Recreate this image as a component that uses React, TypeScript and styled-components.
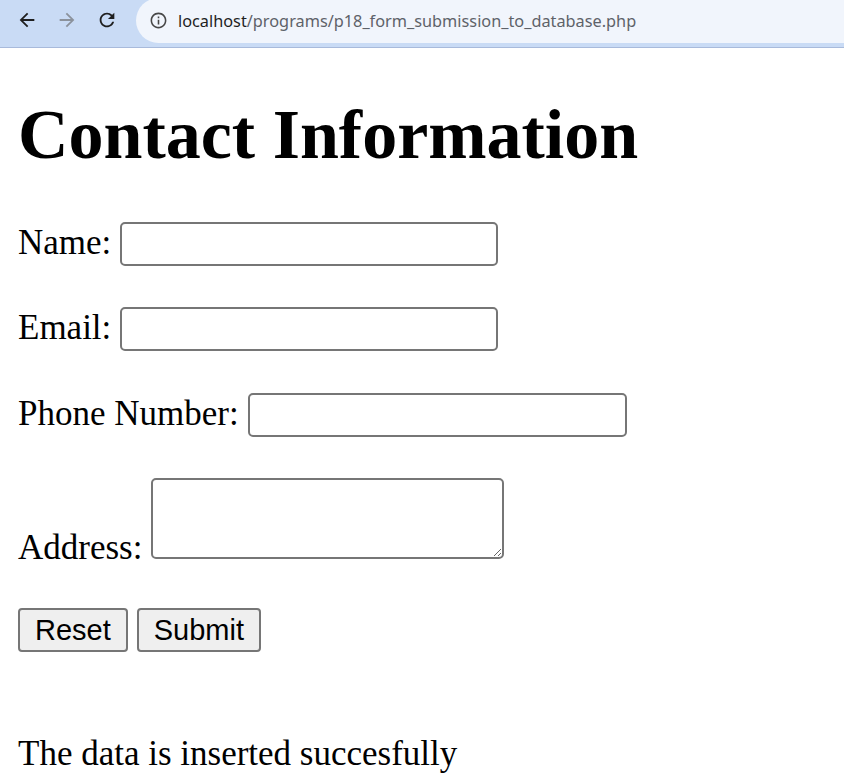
import styled, { createGlobalStyle } from "styled-components";
import { MdArrowBack, MdArrowForward, MdRefresh, MdInfoOutline } from "react-icons/md";

const GlobalStyle = createGlobalStyle`
  html, body {
    margin: 0;
    padding: 0;
    background: #ffffff;
  }
  body {
    font-family: "Liberation Serif", "Times New Roman", serif;
    color: #000000;
  }
`;

const Toolbar = styled.div`
  display: flex;
  align-items: flex-start;
  height: 47px;
  background: #c9dbf5;
  border-bottom: 1px solid #a8badb;
  overflow: hidden;
`;

const NavButton = styled.span<{ $dim?: boolean }>`
  display: flex;
  align-items: center;
  justify-content: center;
  width: 40px;
  height: 40px;
  color: ${({ $dim }) => ($dim ? "#8b929c" : "#1f1f1f")};
  font-size: 22px;
`;

const NavGroup = styled.div`
  display: flex;
  padding-left: 7px;
`;

const Omnibox = styled.div`
  flex: 1;
  display: flex;
  align-items: center;
  margin: -2px 0 0 9px;
  height: 45px;
  padding-left: 13px;
  background: #f1f5fc;
  border-radius: 23px 0 0 23px;
`;

const InfoIcon = styled.span`
  display: flex;
  color: #474747;
  font-size: 19px;
  margin-right: 10px;
`;

const Url = styled.span`
  font-family: "Noto Sans", "Open Sans", sans-serif;
  font-size: 16.3px;
  color: #5e6269;
  white-space: nowrap;
`;

const Host = styled.span`
  color: #1f1f1f;
`;

const Page = styled.div`
  padding: 0 18px;
  font-size: 35px;
`;

const Heading = styled.h1`
  font-size: 70px;
  font-weight: bold;
  margin: 47px 0 47px;
`;

const Field = styled.div<{ $gap?: number }>`
  margin-bottom: ${({ $gap }) => $gap ?? 42}px;
  white-space: nowrap;
`;

const Label = styled.label`
  margin-right: 9px;
`;

const TextInput = styled.input`
  box-sizing: border-box;
  width: ${({ width }) => width}px;
  height: 44px;
  padding: 1px 4px;
  border: 2px solid #767676;
  border-radius: 5px;
  font-family: "Liberation Sans", Arial, sans-serif;
  font-size: 29px;
  background: #ffffff;
  vertical-align: baseline;
  margin: 0;
`;

const TextArea = styled.textarea`
  box-sizing: border-box;
  width: 353px;
  height: 81px;
  border: 2px solid #767676;
  border-radius: 5px;
  font-family: "Liberation Mono", monospace;
  font-size: 29px;
  margin: 0;
  vertical-align: baseline;
`;

const Buttons = styled.div`
  display: flex;
  gap: 9px;
  margin-bottom: 82px;
`;

const Button = styled.button`
  height: 44px;
  padding: 0 15px;
  border: 2px solid #767676;
  border-radius: 4px;
  background: #efefef;
  color: #000000;
  font-family: "Liberation Sans", Arial, sans-serif;
  font-size: 29px;
`;

const Message = styled.div`
  margin: 0;
`;

export default function App() {
  return (
    <>
      <GlobalStyle />
      <Toolbar>
        <NavGroup>
          <NavButton>
            <MdArrowBack />
          </NavButton>
          <NavButton $dim>
            <MdArrowForward />
          </NavButton>
          <NavButton>
            <MdRefresh />
          </NavButton>
        </NavGroup>
        <Omnibox>
          <InfoIcon>
            <MdInfoOutline />
          </InfoIcon>
          <Url>
            <Host>localhost</Host>/programs/p18_form_submission_to_database.php
          </Url>
        </Omnibox>
      </Toolbar>
      <Page>
        <Heading>Contact Information</Heading>
        <form onSubmit={(e) => e.preventDefault()}>
          <Field $gap={41}>
            <Label htmlFor="name">Name:</Label>
            <TextInput id="name" type="text" width={378} />
          </Field>
          <Field $gap={42}>
            <Label htmlFor="email">Email:</Label>
            <TextInput id="email" type="email" width={378} />
          </Field>
          <Field $gap={41}>
            <Label htmlFor="phone">Phone Number:</Label>
            <TextInput id="phone" type="text" width={379} />
          </Field>
          <Field $gap={40}>
            <Label htmlFor="address">Address:</Label>
            <TextArea id="address" />
          </Field>
          <Buttons>
            <Button type="reset">Reset</Button>
            <Button type="submit">Submit</Button>
          </Buttons>
        </form>
        <Message>The data is inserted succesfully</Message>
      </Page>
    </>
  );
}
